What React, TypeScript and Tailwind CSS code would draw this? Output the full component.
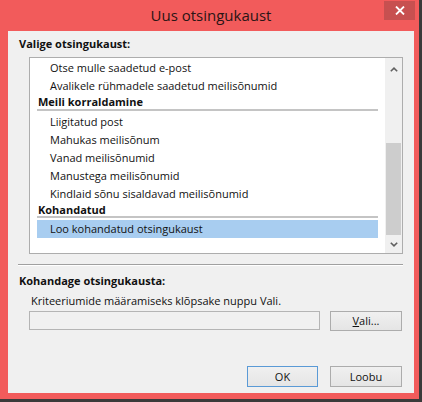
const font = { fontFamily: '"Open Sans", "Noto Sans", sans-serif' }

const Chevron = ({ up }: { up?: boolean }) => (
  <svg width="8" height="5" viewBox="0 0 8 5">
    <path
      d={up ? 'M0.8 4.3 L4 1.2 L7.2 4.3' : 'M0.8 0.7 L4 3.8 L7.2 0.7'}
      fill="none"
      stroke="#606060"
      strokeWidth="1.6"
    />
  </svg>
)

const Item = ({ text, selected }: { text: string; selected?: boolean }) => (
  <div className={`h-[18px] flex items-center pl-[13px] ${selected ? 'bg-[#a8cdf0]' : ''}`}>{text}</div>
)

const Group = ({ text }: { text: string }) => (
  <div className="h-[17px] flex items-center pl-[1px] font-bold border-b-2 border-[#c4c4c4]">{text}</div>
)

const App = () => {
  return (
    <div className="w-[422px] h-[402px] bg-[#3a3a3a] overflow-hidden" style={font}>
      <div className="w-[419px] h-[399px] bg-[#f25b5b] relative">
        {/* title bar */}
        <div className="h-[31px] flex items-center justify-center pl-[3px]">
          <span className="text-[15px] text-[#2a1515] leading-none">Uus otsingukaust</span>
        </div>
        <button className="absolute top-[1px] right-[4px] w-[31px] h-[19px] bg-[#c75050] flex items-center justify-center">
          <svg width="10" height="9" viewBox="0 0 10 9">
            <path d="M1 0.5 L9 8.5 M9 0.5 L1 8.5" stroke="#fff" strokeWidth="1.8" />
          </svg>
        </button>

        {/* content */}
        <div className="ml-[8px] w-[406px] h-[362px] bg-[#f0f0f0] text-[11px] leading-[16px] text-[#111]">
          <div className="pt-[5px] pl-[11px] font-bold">Valige otsingukaust:</div>

          <div className="mt-[5px] ml-[21px] w-[374px] h-[197px] border border-[#adadad] bg-white flex">
            <div className="flex-1 pt-[1px] px-[7px]">
              <Item text="Otse mulle saadetud e-post" />
              <div className="h-[17px] flex items-center pl-[13px]">Avalikele rühmadele saadetud meilisõnumid</div>
              <Group text="Meili korraldamine" />
              <div className="mt-[2px]">
                <Item text="Liigitatud post" />
                <Item text="Mahukas meilisõnum" />
                <Item text="Vanad meilisõnumid" />
                <Item text="Manustega meilisõnumid" />
                <Item text="Kindlaid sõnu sisaldavad meilisõnumid" />
              </div>
              <div className="h-[15px] flex items-center pl-[1px] font-bold border-b-2 border-[#c4c4c4]">Kohandatud</div>
              <div className="mt-[2px]">
                <Item text="Loo kohandatud otsingukaust" selected />
              </div>
            </div>
            <div className="w-[17px] bg-[#f0f0f0] flex flex-col">
              <div className="h-[20px] flex items-center justify-center pt-[2px]">
                <Chevron up />
              </div>
              <div className="h-[65px]" />
              <div className="h-[92px] mx-[1px] bg-[#cdcdcd]" />
              <div className="h-[18px] flex items-center justify-center">
                <Chevron />
              </div>
            </div>
          </div>

          <div className="mt-[10px] ml-[10px] w-[385px] h-[2px] border-t border-[#a0a0a0] border-b border-b-white" />

          <div className="mt-[7px] pl-[11px] font-bold">Kohandage otsingukausta:</div>
          <div className="mt-[4px] pl-[23px]">Kriteeriumide määramiseks klõpsake nuppu Vali.</div>

          <div className="mt-[2px] pl-[21px] flex gap-[10px]">
            <div className="w-[291px] h-[19px] border border-[#b4b4b4] bg-[#f0f0f0]" />
            <button className="w-[72px] h-[20px] border border-[#acacac] bg-gradient-to-b from-[#f0f0f0] to-[#e5e5e5] flex items-center justify-center">
              <span>
                <span className="underline">V</span>ali...
              </span>
            </button>
          </div>

          <div className="mt-[35px] flex justify-end gap-[12px] pr-[12px]">
            <button className="w-[71px] h-[21px] border border-[#5a9ad6] bg-gradient-to-b from-[#f0f0f0] to-[#e5e5e5] flex items-center justify-center">
              OK
            </button>
            <button className="w-[72px] h-[21px] border border-[#acacac] bg-gradient-to-b from-[#f0f0f0] to-[#e5e5e5] flex items-center justify-center">
              Loobu
            </button>
          </div>
        </div>
      </div>
    </div>
  )
}

export default App
